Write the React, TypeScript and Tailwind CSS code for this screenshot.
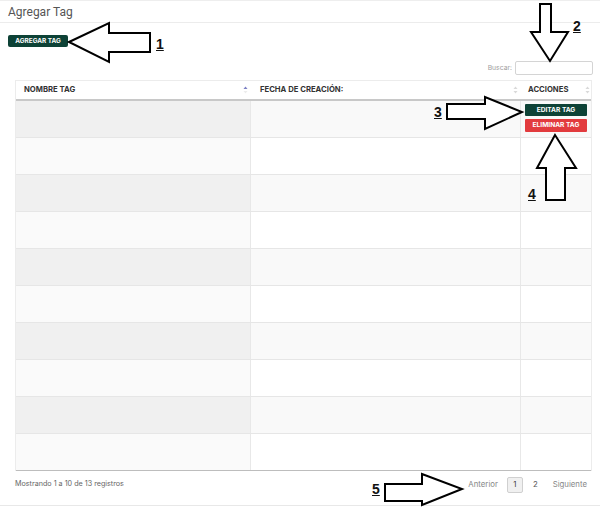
import React from "react";

const rows = Array.from({ length: 10 }, (_, i) => i);

function SortIcon({ active }: { active?: boolean }) {
  return (
    <svg width="5" height="8" viewBox="0 0 5 8" className="shrink-0">
      <polygon points="2.5,0.5 4.5,3 0.5,3" fill={active ? "#7b7fc4" : "#d9d9d9"} />
      <polygon points="0.5,5 4.5,5 2.5,7.5" fill={active ? "#ececec" : "#d9d9d9"} />
    </svg>
  );
}

export default function App() {
  return (
    <div
      className="relative w-[600px] h-[507px] bg-white overflow-hidden"
      style={{ fontFamily: "Inter, 'Noto Sans', sans-serif" }}
    >
      <div className="h-px bg-[#eeeeee]" />
      <div
        className="h-[22px] flex items-center pl-2 border-b border-[#ececec] text-[12px] text-[#555555]"
        style={{ fontFamily: "Roboto, 'Open Sans', sans-serif" }}
      >
        Agregar Tag
      </div>
      <div className="pl-2 pt-3">
        <button className="h-[12px] w-[60px] flex items-center justify-center bg-[#0d4236] text-white text-[6.4px] font-bold rounded-[2px] leading-none">
          AGREGAR TAG
        </button>
        <div className="pl-[7px] w-[585px]">
          <div className="mt-[14px] flex justify-end items-center gap-[3px] h-[14px]">
            <span className="text-[6.8px] text-[#a0a0a0]">Buscar:</span>
            <div className="w-[78px] h-[14px] border border-[#d4d4d4] rounded-[2px] bg-white" />
          </div>
          <div className="mt-[5px] w-[577px] border-x border-[#ececec]">
            <div className="grid grid-cols-[235px_270px_70px] h-[21px] border-t border-[#ececec] border-b-2 border-b-[#c8c8c8] text-[7.7px] font-bold text-[#333333]">
              <div className="flex items-center justify-between pl-[8px] pr-[3px]">
                <span>NOMBRE TAG</span>
                <SortIcon active />
              </div>
              <div className="flex items-center justify-between pl-[9px] pr-[3px]">
                <span>FECHA DE CREACIÓN:</span>
                <SortIcon />
              </div>
              <div className="flex items-center justify-between pl-[7px] pr-[1px]">
                <span>ACCIONES</span>
                <SortIcon />
              </div>
            </div>
            {rows.map((i) => {
              const odd = i % 2 === 0;
              const last = i === rows.length - 1;
              return (
                <div
                  key={i}
                  className={
                    "grid grid-cols-[235px_270px_70px] h-[37px] border-b " +
                    (last ? "border-[#bdbdbd]" : "border-[#e6e6e6]")
                  }
                >
                  <div className={(odd ? "bg-[#f0f0f0]" : "bg-[#fafafa]") + " border-r border-[#e8e8e8]"} />
                  <div className={(odd ? "bg-[#f9f9f9]" : "bg-white") + " border-r border-[#e8e8e8]"} />
                  <div className={(odd ? "bg-[#f9f9f9]" : "bg-white") + " flex flex-col gap-[3px] pl-[4px] pt-[3px]"}>
                    {i === 0 && (
                      <>
                        <button className="h-[12px] w-[62px] flex items-center justify-center bg-[#0d4236] text-white text-[6.6px] font-bold rounded-[1px] leading-none">
                          EDITAR TAG
                        </button>
                        <button className="h-[13px] w-[62px] flex items-center justify-center bg-[#e23b3e] text-white text-[6.6px] font-bold rounded-[1px] leading-none">
                          ELIMINAR TAG
                        </button>
                      </>
                    )}
                  </div>
                </div>
              );
            })}
          </div>
          <div className="mt-[5px] w-[577px] h-[17px] flex items-center justify-between">
            <span className="text-[7.2px] text-[#666666]">Mostrando 1 a 10 de 13 registros</span>
            <div className="flex items-center text-[7.8px] text-[#888888] pr-[5px]">
              <span className="mr-[9px]">Anterior</span>
              <span className="w-[16px] h-[16px] flex items-center justify-center border border-[#d0d0d0] rounded-[2px] bg-[#f0f0f0] text-[#444444]">
                1
              </span>
              <span className="ml-[10px] mr-[15px] text-[#555555]">2</span>
              <span>Siguiente</span>
            </div>
          </div>
        </div>
      </div>
      <div className="absolute left-0 right-0 top-[505px] h-px bg-[#e8e8e8]" />

      <svg className="absolute inset-0 pointer-events-none" width="600" height="507" viewBox="0 0 600 507">
        <g fill="white" stroke="black" strokeWidth="2" strokeLinejoin="miter">
          <polygon points="69,42 109,23 109,33 150,33 150,52 109,52 109,62" />
          <polygon points="540,4 551,4 551,32 568,32 550,61 531,32 540,32" />
          <polygon points="447,104 485,104 485,97 522,112 485,129 485,119 447,119" />
          <polygon points="555,135 576,168 565,168 565,200 546,200 546,168 537,168" />
          <polygon points="385,484 422,484 422,474 462,489 422,505 422,501 385,501" />
        </g>
      </svg>
      {[
        { n: "1", x: 156, y: 37 },
        { n: "2", x: 573, y: 19 },
        { n: "3", x: 434, y: 105 },
        { n: "4", x: 528, y: 187 },
        { n: "5", x: 372, y: 482 },
      ].map((l) => (
        <span
          key={l.n}
          className="absolute text-[14px] font-bold underline text-[#111111] leading-none"
          style={{ left: l.x, top: l.y, fontFamily: "'Liberation Sans', Arial, sans-serif" }}
        >
          {l.n}
        </span>
      ))}
    </div>
  );
}
